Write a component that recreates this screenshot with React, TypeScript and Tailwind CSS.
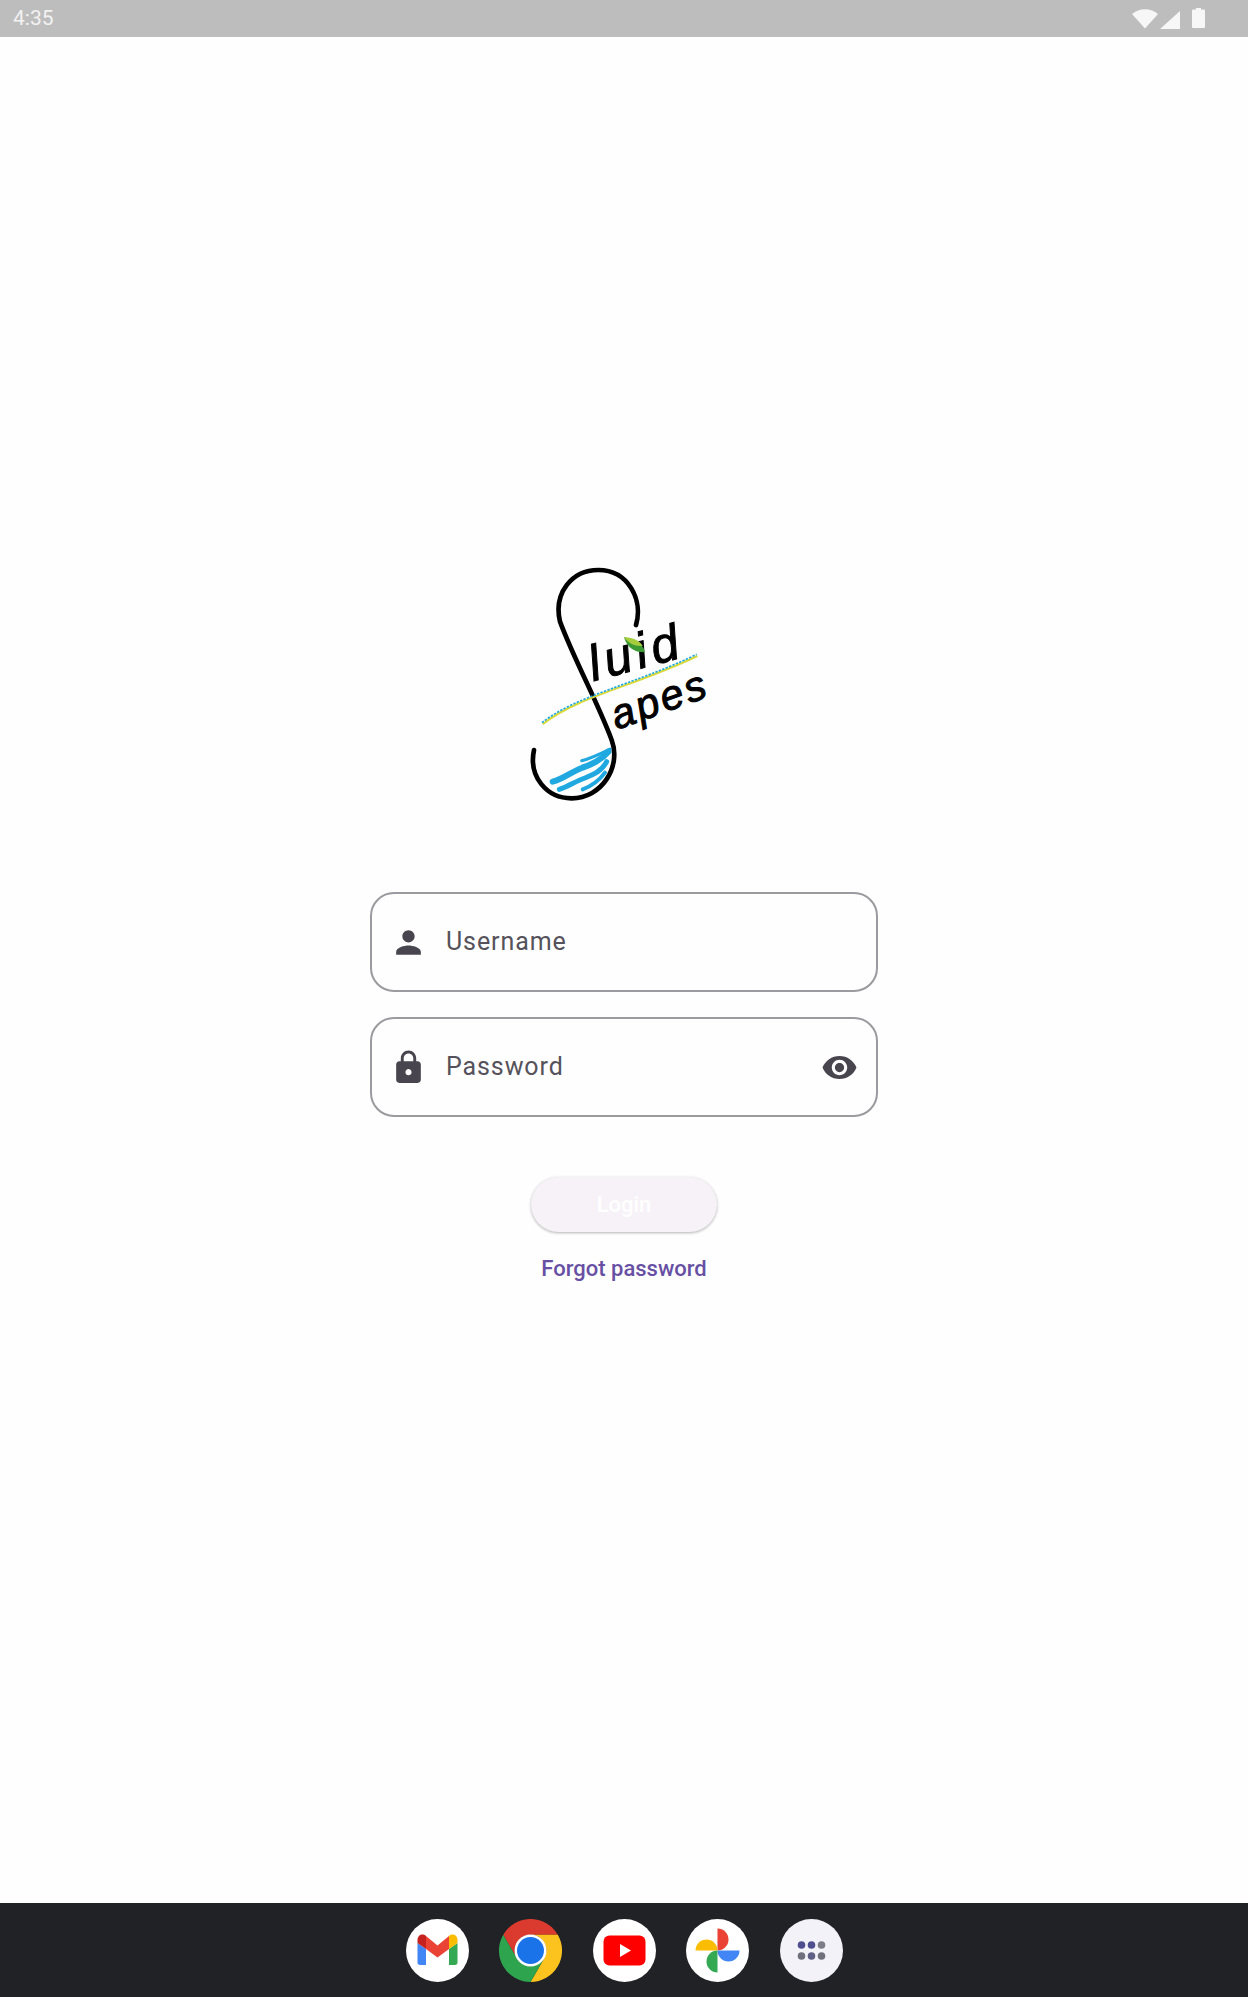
import React from 'react';

const personPath = "M12 12c2.21 0 4-1.79 4-4s-1.79-4-4-4-4 1.79-4 4 1.79 4 4 4zm0 2c-2.67 0-8 1.34-8 4v2h16v-2c0-2.66-5.33-4-8-4z";
const lockPath = "M18 8h-1V6c0-2.76-2.24-5-5-5S7 3.24 7 6v2H6c-1.1 0-2 .9-2 2v10c0 1.1.9 2 2 2h12c1.1 0 2-.9 2-2V10c0-1.1-.9-2-2-2zm-6 9c-1.1 0-2-.9-2-2s.9-2 2-2 2 .9 2 2-.9 2-2 2zm3.1-9H8.9V6c0-1.71 1.39-3.1 3.1-3.1 1.71 0 3.1 1.39 3.1 3.1v2z";
const eyePath = "M12 4.5C7 4.5 2.73 7.61 1 12c1.73 4.39 6 7.5 11 7.5s9.27-3.11 11-7.5c-1.73-4.39-6-7.5-11-7.5zM12 17c-2.76 0-5-2.24-5-5s2.24-5 5-5 5 2.24 5 5-2.24 5-5 5zm0-8c-1.66 0-3 1.34-3 3s1.34 3 3 3 3-1.34 3-3-1.34-3-3-3z";

const Icon: React.FC<{ d: string }> = ({ d }) => (
  <svg viewBox="0 0 24 24" className="h-[37px] w-[37px] flex-none fill-[#49454f]">
    <path d={d} />
  </svg>
);

const StatusBar: React.FC = () => (
  <div className="flex h-[37px] flex-none items-center justify-between bg-[#bdbdbd] pl-[13px] pr-[43px]">
    <span className="text-[21px] text-[#f2f2f2]">4:35</span>
    <div className="flex items-center gap-[2px]">
      <svg viewBox="0 0 26 20" className="h-[20px] w-[26px] fill-[#f7f7f7]">
        <path d="M0 5C7-1.5 19-1.5 26 5L13 19.500Z" />
      </svg>
      <svg viewBox="0 0 20 18" className="mt-[2px] h-[18px] w-[20px] fill-[#f7f7f7]">
        <path d="M20 0V18H0Z" />
      </svg>
      <svg viewBox="0 0 13 20" className="mb-[2px] ml-[10px] h-[20px] w-[13px] fill-[#f7f7f7]">
        <path d="M4 0H9V1.500H11.500C12.500 1.500 13 2 13 3V18.500C13 19.500 12.500 20 11.500 20H1.500C.5 20 0 19.500 0 18.500V3C0 2 .5 1.500 1.500 1.500H4Z" />
      </svg>
    </div>
  </div>
);

// Logo mark: the swoosh, stripe, leaf and water are drawn, the wordmark stays real text
const Logo: React.FC = () => (
  <svg viewBox="0 0 744 780" className="h-[260px] w-[248px]">
    <path
      d="M408 225C430 150 385 60 295 60C215 60 160 130 180 215C225 335 290 450 335 570C365 650 305 745 215 745C140 745 85 680 102 600"
      fill="none"
      stroke="#000"
      strokeWidth="14"
      strokeLinecap="round"
    />
    <text
      x="280"
      y="394"
      transform="rotate(-15 280 394)"
      fontFamily="'Liberation Sans', sans-serif"
      fontStyle="italic"
      fontSize="150"
      letterSpacing="14"
      stroke="#000"
      strokeWidth="3"
    >
      luid
    </text>
    <text
      x="350"
      y="540"
      transform="rotate(-20 350 540)"
      fontFamily="'Liberation Sans', sans-serif"
      fontStyle="italic"
      fontSize="125"
      letterSpacing="8"
      stroke="#000"
      strokeWidth="3"
    >
      apes
    </text>
    <path d="M128 523C230 440 400 410 592 318" fill="none" stroke="#d9d93a" strokeWidth="6" />
    <path d="M126 518C230 436 400 405 590 313" fill="none" stroke="#1fa9e0" strokeWidth="5" strokeDasharray="7 4" />
    <path d="M372 262C395 265 430 280 435 307C405 308 382 295 372 262Z" fill="#3c9a35" />
    <path d="M372 262C395 262 420 272 428 288C405 290 385 280 372 262Z" fill="#a5cc3a" />
    <g fill="none" stroke="#1fa9e0" strokeLinecap="round">
      <path d="M245 632C275 625 300 612 330 597" strokeWidth="9" />
      <path d="M158 695C190 687 215 665 245 654C270 644 300 634 325 605" strokeWidth="18" />
      <path d="M178 718C205 710 225 694 255 684C280 674 305 664 320 635" strokeWidth="15" />
      <path d="M248 718C270 710 295 695 315 668" strokeWidth="12" />
    </g>
  </svg>
);

const LoginForm: React.FC = () => (
  <div className="flex flex-1 flex-col items-center bg-[#fefefe] pt-[513px]">
    <Logo />
    <div className="mt-[82px] flex w-[508px] flex-col gap-[25px]">
      <label className="flex h-[100px] items-center rounded-[24px] border-2 border-[#9a9a9f] pl-[18px] pr-[18px]">
        <Icon d={personPath} />
        <input
          placeholder="Username"
          className="ml-[19px] w-full bg-transparent text-[25px] tracking-[0.9px] outline-none placeholder:text-[#55525b]"
        />
      </label>
      <label className="flex h-[100px] items-center rounded-[24px] border-2 border-[#9a9a9f] pl-[18px] pr-[18px]">
        <Icon d={lockPath} />
        <input
          placeholder="Password"
          className="ml-[19px] w-full bg-transparent text-[25px] tracking-[0.9px] outline-none placeholder:text-[#55525b]"
        />
        <Icon d={eyePath} />
      </label>
    </div>
    <button className="mt-[60px] h-[55px] w-[186px] rounded-full bg-[#f6f2f8] text-[22px] font-medium text-white shadow-[0_1px_3px_rgba(0,0,0,0.3)]">
      Login
    </button>
    <button className="mt-[20px] text-[22px] font-medium text-[#6750a4]">
      Forgot password
    </button>
  </div>
);

const Gmail = () => (
  <svg viewBox="0 0 63 63" className="h-[63px] w-[63px]">
    <circle cx="31.500" cy="31.500" r="31.500" fill="#fff" />
    <path d="M11.500 24L20 30V46H14C12.500 46 11.500 45 11.500 43.500Z" fill="#4285f4" />
    <path d="M51.500 24L43 30V46H49C50.500 46 51.500 45 51.500 43.500Z" fill="#34a853" />
    <path d="M20 17L31.500 26.500L43 17V30L31.500 38.500L20 30Z" fill="#ea4335" />
    <path d="M11.500 24V21C11.500 16 16.500 14 20 17V30Z" fill="#c5221f" />
    <path d="M43 17C46.500 14 51.500 16 51.500 21V24L43 30Z" fill="#fbbc04" />
  </svg>
);

const Chrome = () => (
  <svg viewBox="0 0 63 63" className="h-[63px] w-[63px]">
    <path d="M4.200 15.750A31.500 31.500 0 0 1 58.800 15.750H31.500A15.750 15.750 0 0 0 17.900 39.400Z" fill="#db3a2e" />
    <path d="M58.800 15.750A31.500 31.500 0 0 1 31.500 63L45.100 39.400A15.750 15.750 0 0 0 31.500 15.750Z" fill="#fcc31e" />
    <path d="M31.500 63A31.500 31.500 0 0 1 4.200 15.750L17.900 39.400A15.750 15.750 0 0 0 45.100 39.400Z" fill="#2ea44f" />
    <circle cx="31.500" cy="31.500" r="16" fill="#fff" />
    <circle cx="31.500" cy="31.500" r="13.500" fill="#1a73e8" />
  </svg>
);

const YouTube = () => (
  <svg viewBox="0 0 63 63" className="h-[63px] w-[63px]">
    <circle cx="31.500" cy="31.500" r="31.500" fill="#fff" />
    <rect x="10.500" y="16.500" width="42" height="30" rx="6" fill="#ff0000" />
    <path d="M27 25L38 31.500L27 38Z" fill="#fff" />
  </svg>
);

const Photos = () => (
  <svg viewBox="0 0 63 63" className="h-[63px] w-[63px]">
    <circle cx="31.500" cy="31.500" r="31.500" fill="#fff" />
    <path d="M31.500 9.500A11 11 0 0 1 31.500 31.500Z" fill="#ea4335" />
    <path d="M9.500 31.500A11 11 0 0 1 31.500 31.500Z" fill="#fbbc04" />
    <path d="M31.500 31.500H53.500A11 11 0 0 1 31.500 31.500Z" fill="#4285f4" />
    <path d="M31.500 31.500V53.500A11 11 0 0 1 31.500 31.500Z" fill="#34a853" />
  </svg>
);

const AllApps = () => (
  <svg viewBox="0 0 63 63" className="h-[63px] w-[63px]">
    <circle cx="31.500" cy="31.500" r="31.500" fill="#f4f2f9" />
    <circle cx="21.500" cy="26" r="3.800" fill="#4f4f8f" />
    <circle cx="31.500" cy="26" r="3.800" fill="#4f4f8f" />
    <circle cx="41.500" cy="26" r="3.800" fill="#7d7d88" />
    <circle cx="21.500" cy="37" r="3.800" fill="#70707c" />
    <circle cx="31.500" cy="37" r="3.800" fill="#5f5f85" />
    <circle cx="41.500" cy="37" r="3.800" fill="#70707c" />
  </svg>
);

const NavBar: React.FC = () => (
  <div className="flex h-[94px] flex-none items-center justify-center gap-[30.500px] bg-[#212226]">
    <Gmail />
    <Chrome />
    <YouTube />
    <Photos />
    <AllApps />
  </div>
);

const App: React.FC = () => {
  return (
    <div className="flex h-[1997px] w-[1248px] flex-col overflow-hidden font-['Roboto',sans-serif]">
      <StatusBar />
      <LoginForm />
      <NavBar />
    </div>
  );
};

export default App;
